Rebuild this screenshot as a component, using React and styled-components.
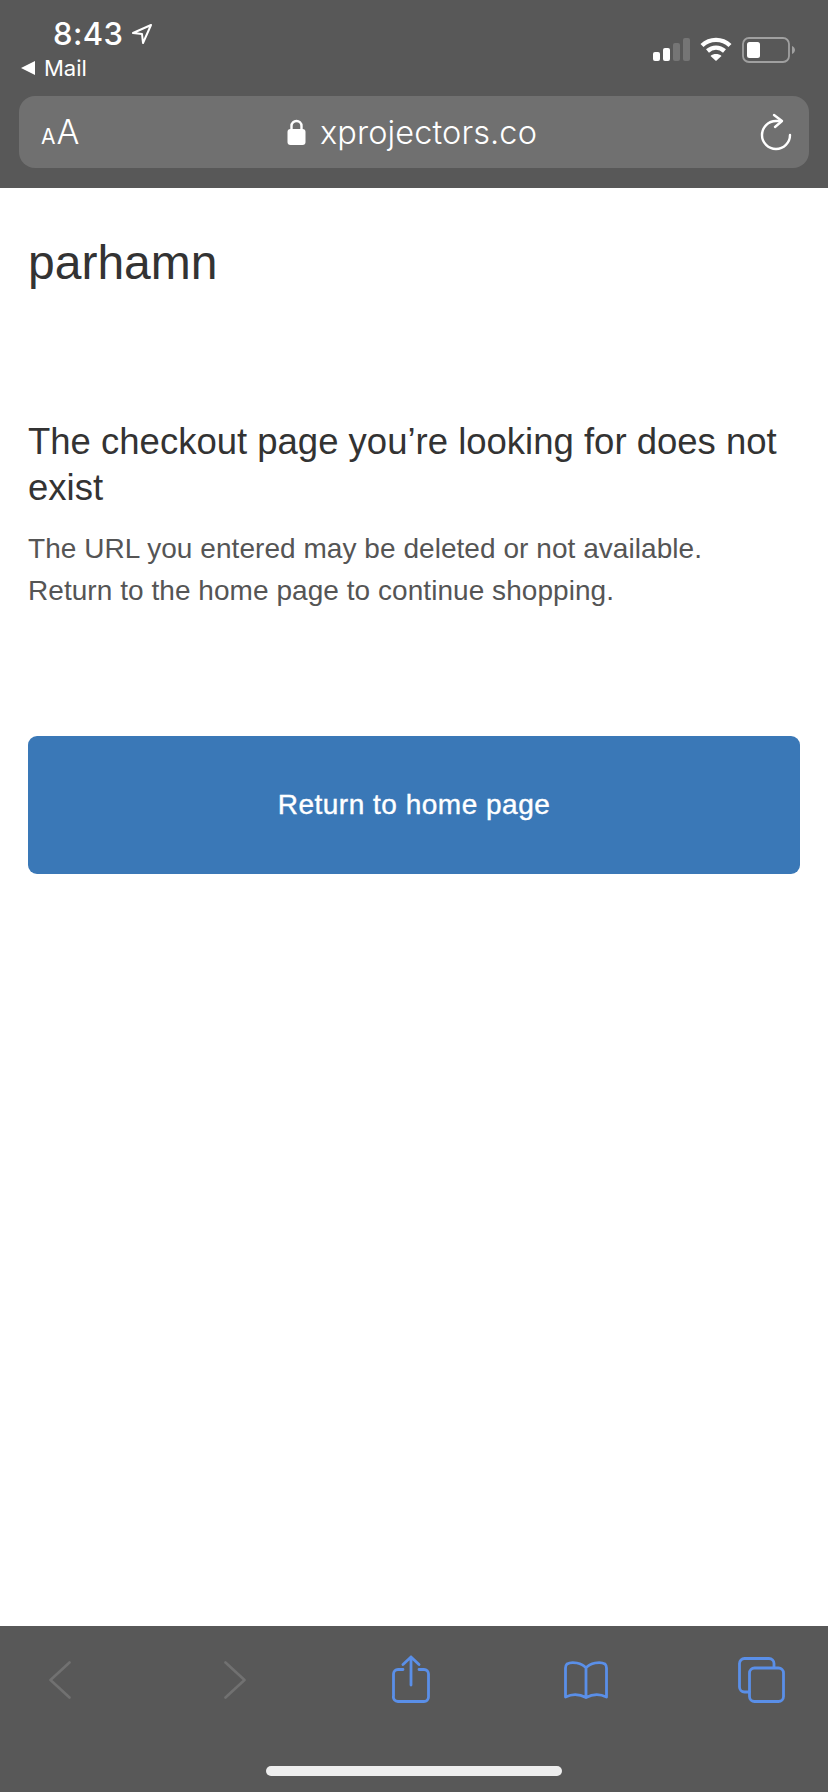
import React from "react";
import styled, { createGlobalStyle } from "styled-components";

const Global = createGlobalStyle`
  html, body { margin: 0; padding: 0; background: #fff; }
  body { font-family: "Liberation Sans", Arial, sans-serif; }
`;
const Screen = styled.div`
  width: 828px; height: 1792px; display: flex; flex-direction: column; overflow: hidden; background: #fff;
`;
const TopChrome = styled.header`
  height: 188px; box-sizing: border-box; background: #585858; padding: 0 19px; display: flex; flex-direction: column; flex: none;
  font-family: "Inter", "Liberation Sans", sans-serif;
`;
const StatusRow = styled.div`
  height: 96px; display: flex; justify-content: space-between;
`;
const StatusLeft = styled.div`
  display: flex; flex-direction: column; padding-top: 17px;
`;
const Time = styled.div`
  display: flex; align-items: center; gap: 8px; padding-left: 34px; height: 34px;
  color: #fff; font-size: 31px; font-weight: 500; line-height: 34px; letter-spacing: 0.4px;
`;
const BackToMail = styled.div`
  display: flex; align-items: center; gap: 9px; color: #fff; font-size: 22px; line-height: 26px; margin-top: 4px; padding-left: 2px;
`;
const StatusRight = styled.div`
  display: flex; align-items: flex-start; gap: 10px; padding: 37px 13px 0 0;
`;
const UrlBar = styled.div`
  height: 72px; border-radius: 16px; background: #707070; display: grid; grid-template-columns: 1fr auto 1fr; align-items: center; padding: 0 19px 0 15px;
`;
const AaLabel = styled.div`
  color: #fff; line-height: 1; display: flex; align-items: baseline; margin-left: 7px; gap: 1px;
`;
const SmallA = styled.span`font-size: 21px; font-weight: 400;`;
const BigA = styled.span`font-size: 34px; font-weight: 300;`;
const Address = styled.div`
  display: flex; align-items: center; gap: 14px; color: #fff; font-size: 32.500px; font-weight: 300; letter-spacing: 0.1px;
`;
const Reload = styled.svg`
  justify-self: end; display: block; margin-right: -2px;
`;
const Page = styled.main`
  flex: 1; padding: 0 28px; box-sizing: border-box; color: #333;
`;
const Shop = styled.h1`
  margin: 48px 0 0; font-size: 48px; line-height: 54px; font-weight: 400; color: #333;
`;
const Title = styled.h2`
  margin: 129px 0 0; font-size: 36.500px; line-height: 46px; font-weight: 400; color: #333;
`;
const Body = styled.p`
  margin: 17px 0 0; font-size: 28px; line-height: 42px; color: #555; font-weight: 400; letter-spacing: 0.05px;
`;
const Button = styled.button`
  display: block; width: 772px; height: 138px; margin-top: 124px; border: 0; border-radius: 9px; background: #3a78b7; color: #fff;
  font-family: inherit; font-size: 28px; font-weight: 400; letter-spacing: 0.5px; -webkit-text-stroke: 0.4px #fff;
`;
const BottomBar = styled.footer`
  height: 166px; background: #585858; flex: none; display: flex; flex-direction: column; align-items: center;
`;
const Tools = styled.div`
  width: 100%; height: 112px; box-sizing: border-box; padding: 0 43px 0 36px; display: flex; justify-content: space-between;
`;
const ToolSlot = styled.div`
  width: 48px; display: flex; justify-content: center; align-items: flex-start;
`;
const ToolIcon = styled.svg`
  display: block; fill: none; stroke-linecap: round; stroke-linejoin: round; margin-top: ${p => p.$top}px;
  stroke: ${p => (p.$disabled ? "#717171" : "#5a8fe8")};
`;
const HomeBar = styled.div`
  width: 296px; height: 10px; border-radius: 5px; background: #eee; margin-top: 28px;
`;

export default function App() {
  return (
    <Screen>
      <Global />
      <TopChrome>
        <StatusRow>
          <StatusLeft>
            <Time>
              8:43
              <svg width="22" height="22" viewBox="0 0 22 22" fill="none" stroke="#fff" strokeWidth="2" strokeLinejoin="round"><path d="M20 2 2 10l9 1 1 9z" /></svg>
            </Time>
            <BackToMail>
              <svg width="14" height="14" viewBox="0 0 14 14" fill="#fff"><path d="M14 0v14L0 7z" /></svg>
              Mail
            </BackToMail>
          </StatusLeft>
          <StatusRight>
            <svg width="37" height="24" viewBox="0 0 37 24">
              <rect x="0" y="15" width="7" height="9" rx="2" fill="#fff" />
              <rect x="10" y="11" width="7" height="13" rx="2" fill="#fff" />
              <rect x="20" y="6" width="7" height="18" rx="2" fill="#757575" />
              <rect x="30" y="1" width="7" height="23" rx="2" fill="#757575" />
            </svg>
            <svg width="32" height="24" viewBox="0 0 32 24" fill="none" stroke="#fff" strokeWidth="4.400">
              <path d="M2 8.500C10 1 22 1 30 8.500" />
              <path d="M7.500 14c5-4.500 12-4.500 17 0" />
              <path d="M16 24l-5.500-5c3-2.600 8-2.600 11 0z" fill="#fff" stroke="none" />
            </svg>
            <svg width="54" height="26" viewBox="0 0 54 26">
              <rect x="1" y="1" width="46" height="24" rx="6" fill="none" stroke="#a0a0a0" strokeWidth="1.800" />
              <rect x="5" y="5" width="13" height="16" rx="2.500" fill="#fff" />
              <path d="M50 9c2 1 3 2.500 3 4s-1 3-3 4z" fill="#a0a0a0" />
            </svg>
          </StatusRight>
        </StatusRow>
        <UrlBar>
          <AaLabel><SmallA>A</SmallA><BigA>A</BigA></AaLabel>
          <Address>
            <svg width="19" height="26" viewBox="0 0 19 26"><path d="M4.500 11V7a5 5 0 0 1 10 0v4" fill="none" stroke="#fff" strokeWidth="2.400" /><rect x="0.500" y="10" width="18" height="16" rx="3" fill="#fff" /></svg>
            xprojectors.co
          </Address>
          <Reload width="32" height="38" viewBox="0 0 32 38" fill="none" stroke="#fff" strokeWidth="2.400" strokeLinecap="round" strokeLinejoin="round">
            <path d="M30 22a14 14 0 1 1-14-14h3" />
            <path d="M14 2l8 6-7 6" />
          </Reload>
        </UrlBar>
      </TopChrome>
      <Page>
        <Shop>parhamn</Shop>
        <Title>The checkout page you’re looking for does not exist</Title>
        <Body>The URL you entered may be deleted or not available.<br />Return to the home page to continue shopping.</Body>
        <Button>Return to home page</Button>
      </Page>
      <BottomBar>
        <Tools>
          <ToolSlot><ToolIcon $disabled $top={35} width="22" height="38" viewBox="0 0 22 38" strokeWidth="2.600"><path d="M20.500 1.500 1.500 19l19 17.500" /></ToolIcon></ToolSlot>
          <ToolSlot><ToolIcon $disabled $top={35} width="22" height="38" viewBox="0 0 22 38" strokeWidth="2.600"><path d="M1.500 1.500 20.500 19l-19 17.500" /></ToolIcon></ToolSlot>
          <ToolSlot><ToolIcon $top={29} width="38" height="48" viewBox="0 0 38 48" strokeWidth="2.800"><path d="M11 14.500H6a4.500 4.500 0 0 0-4.500 4.500v22A4.500 4.500 0 0 0 6 46.500h26a4.500 4.500 0 0 0 4.500-4.500V19a4.500 4.500 0 0 0-4.500-4.500h-5M19 30V2M11 9.500 19 2l8 7.500" /></ToolIcon></ToolSlot>
          <ToolSlot><ToolIcon $top={35} width="44" height="38" viewBox="0 0 44 38" strokeWidth="2.800"><path d="M22 7C18 2 8 0 3 3c-1 1-1.500 2-1.500 4v29c6-3 14-3 20.500 0.500C28.500 33 36.500 33 42.500 36V7c0-2-.5-3-1.500-4-5-3-15-1-19 4zM22 7v29" /></ToolIcon></ToolSlot>
          <ToolSlot><ToolIcon $top={31} width="47" height="46" viewBox="0 0 47 46" strokeWidth="2.800"><path d="M36 10V6.500a5 5 0 0 0-5-5H6.500a5 5 0 0 0-5 5V30a5 5 0 0 0 5 5H11" /><rect x="11.500" y="11" width="34" height="33.500" rx="5" /></ToolIcon></ToolSlot>
        </Tools>
        <HomeBar />
      </BottomBar>
    </Screen>
  );
}
